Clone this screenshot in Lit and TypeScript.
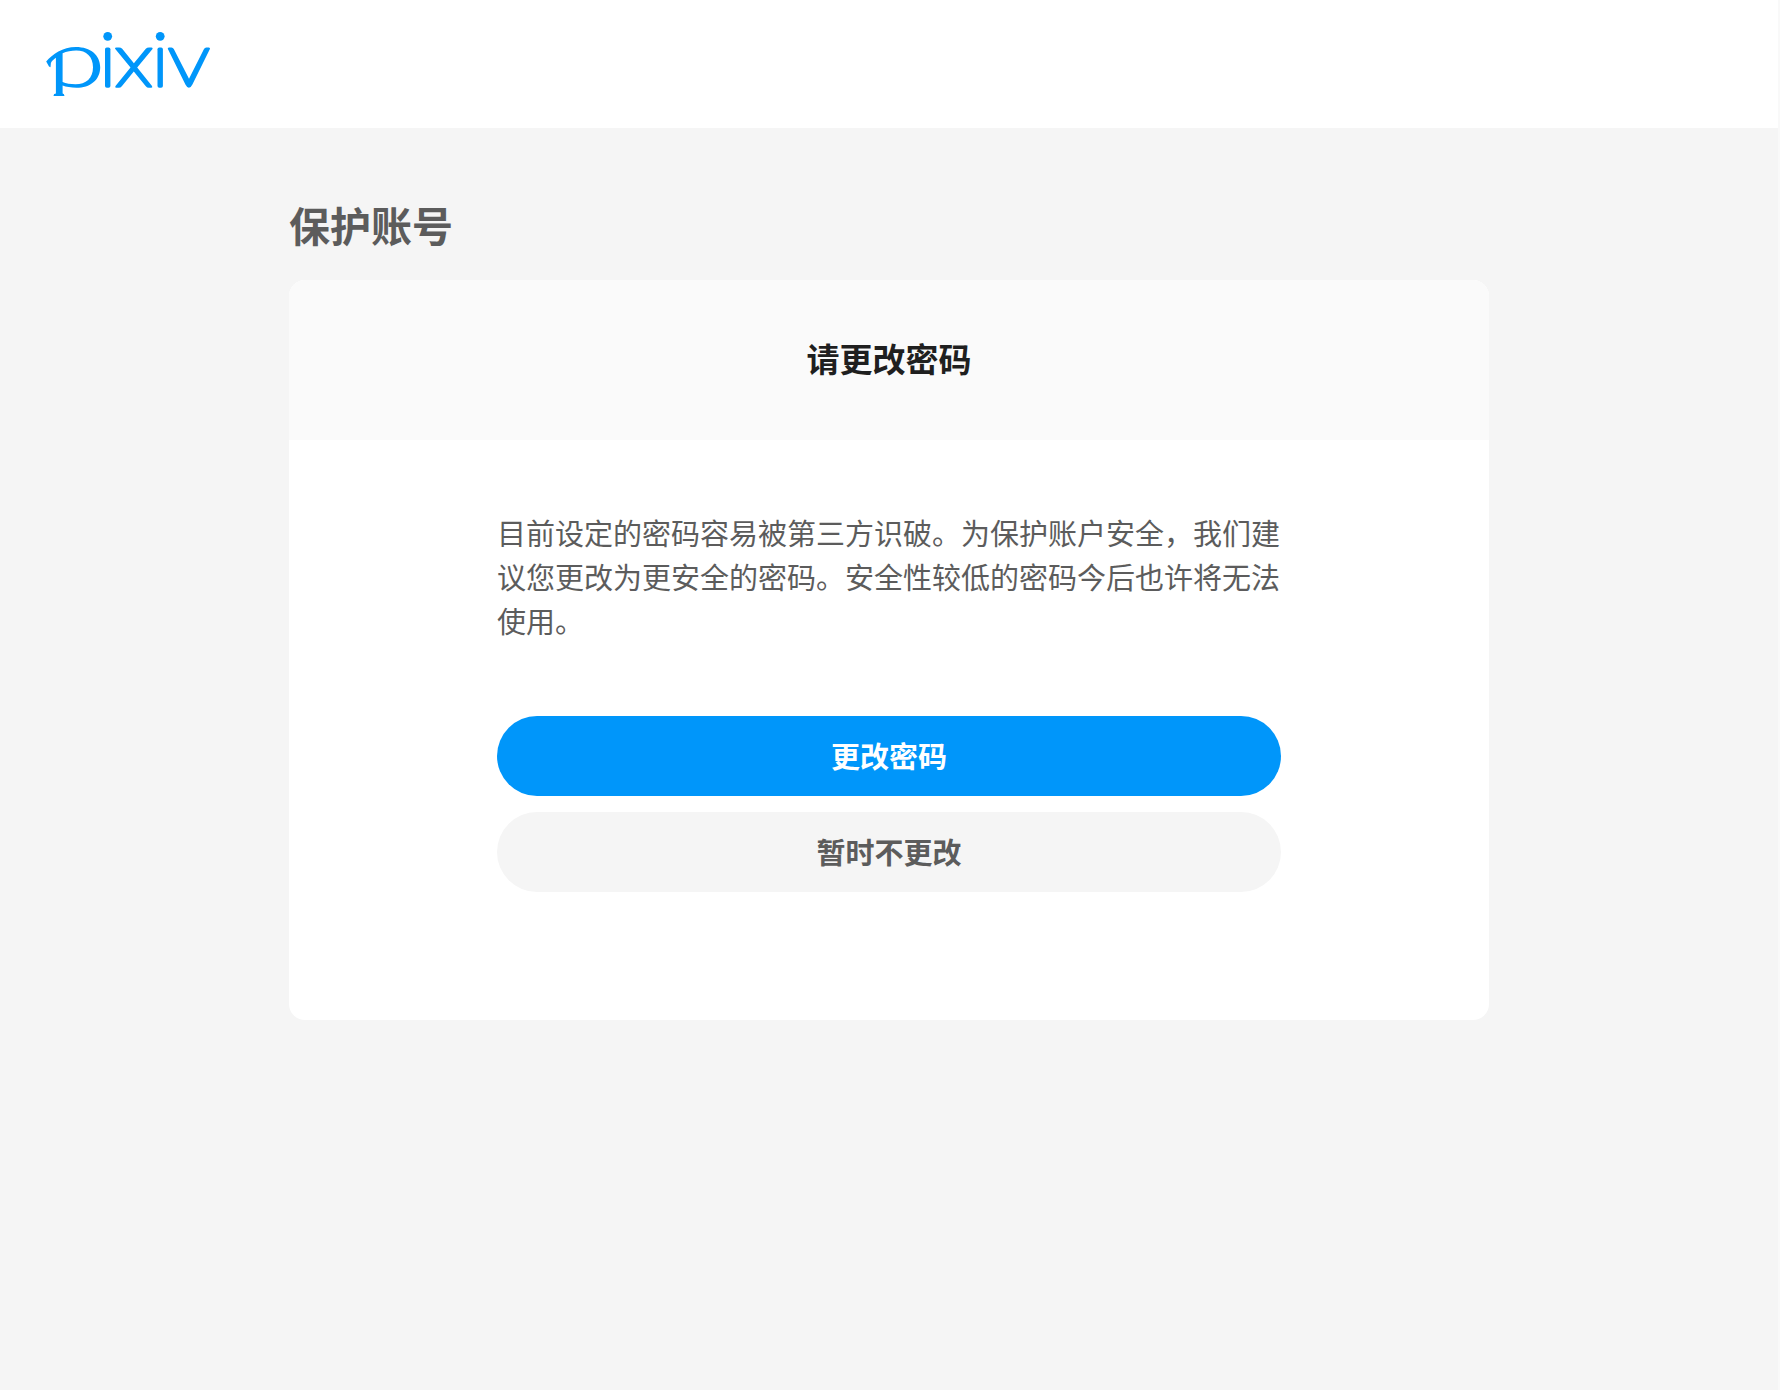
import { LitElement, html, css } from "lit";
import { customElement } from "lit/decorators.js";

@customElement("pixiv-logo")
export class PixivLogo extends LitElement {
  static styles = css`
    :host { display: block; }
    .logo { display: block; width: 168px; height: 68px; }
  `;
  render() {
    return html`
      <svg class="logo" viewBox="0 0 168 68" role="img" aria-label="pixiv">
        <g fill="#0096fa">
          <path fill-rule="evenodd" d="M.2 30.4C6.500 23.300 16.500 16 30 16C44.500 16 54.200 24.200 54.200 36.200C54.200 49 44 56.800 30.500 56.800C25 56.800 20 55.900 16.600 54.600V62.200Q16.700 63 17.800 63L18.500 65H7.500L8.100 63Q9.900 63 9.900 62.200V26.800C7.700 28.300 5.700 30.200 4.900 32L4.500 36.200L3 35.500ZM16.600 22.200V51.100C20 52.500 24.500 53.300 29.500 53.300C40 53.300 47 47.300 47 36.200C47 25.500 40.500 19.400 30.200 19.400C25.500 19.400 20.500 20.400 16.600 22.200Z"/>
          <circle cx="61.700" cy="5.300" r="4.400"/>
          <circle cx="114.200" cy="5.300" r="4.400"/>
          <rect x="59" y="16.400" width="5.400" height="40.400" rx="1.800"/>
          <rect x="111.500" y="16.400" width="5.400" height="40.400" rx="1.800"/>
          <path d="M69 17.500Q68.800 16.500 70.500 16.500H73Q75 16.500 76.200 17.800L87.900 32.200L99.800 17.800Q101 16.500 103 16.500H105.500Q107.200 16.500 106.500 18L91.200 36.400L106 55Q107 56.700 105.300 56.700H102.800Q101 56.700 99.800 55.200L87.800 40.500L75.800 55.200Q74.600 56.700 72.800 56.700H70.200Q68.500 56.700 69.500 55L84.500 36.400L69.300 18Z"/>
          <path d="M121.900 18Q121.300 16.500 123 16.500H125.500Q127 16.500 127.800 18L143 47.800L158 18Q158.800 16.500 160.300 16.500H162.800Q164.500 16.500 163.900 18L146.400 53.600Q145 56.700 142.900 56.700Q140.900 56.700 139.400 53.600Z"/>
        </g>
      </svg>
    `;
  }
}

@customElement("app-root")
export class AppRoot extends LitElement {
  static styles = css`
    :host {
      display: block;
      box-sizing: border-box;
      min-height: 100vh;
      border-right: 2px solid #f9f9f9;
      background: #f5f5f5;
      color: #5c5c5c;
      font-family: "Noto Sans CJK SC", sans-serif;
    }
    .header {
      background: #fff;
      padding: 31px 46px 29px;
    }
    .home { display: block; width: max-content; }
    .content {
      max-width: 1200px;
      margin: 0 auto;
      padding: 68px 24px;
    }
    .heading {
      margin: 0 0 28px;
      font-size: 41px;
      line-height: 56px;
      font-weight: 700;
    }
    .card {
      border-radius: 16px;
      background: #fff;
      overflow: hidden;
    }
    .title {
      margin: 0;
      padding: 54px 24px 58px;
      background: #fafafa;
      color: #1f1f1f;
      text-align: center;
      font-size: 33px;
      line-height: 48px;
      font-weight: 700;
    }
    .body {
      max-width: 784px;
      margin: 0 auto;
      padding: 70px 24px 128px;
    }
    .text {
      margin: 0 0 74px;
      font-size: 29px;
      line-height: 44px;
    }
    .actions { display: grid; gap: 16px; }
    .button {
      height: 80px;
      border: 0;
      border-radius: 40px;
      padding: 0 24px 2px;
      background: #f5f5f5;
      color: #5c5c5c;
      font: 700 29px/44px "Noto Sans CJK SC", sans-serif;
      cursor: pointer;
    }
    .primary { background: #0096fa; color: #fff; }
  `;
  render() {
    return html`
      <header class="header">
        <a class="home" href="/" aria-label="pixiv"><pixiv-logo></pixiv-logo></a>
      </header>
      <main class="content" lang="zh-CN">
        <h1 class="heading">保护账号</h1>
        <section class="card">
          <h2 class="title">请更改密码</h2>
          <div class="body">
            <p class="text">目前设定的密码容易被第三方识破。为保护账户安全，我们建议您更改为更安全的密码。安全性较低的密码今后也许将无法使用。</p>
            <div class="actions">
              <button class="button primary" type="button">更改密码</button>
              <button class="button" type="button">暂时不更改</button>
            </div>
          </div>
        </section>
      </main>
    `;
  }
}
